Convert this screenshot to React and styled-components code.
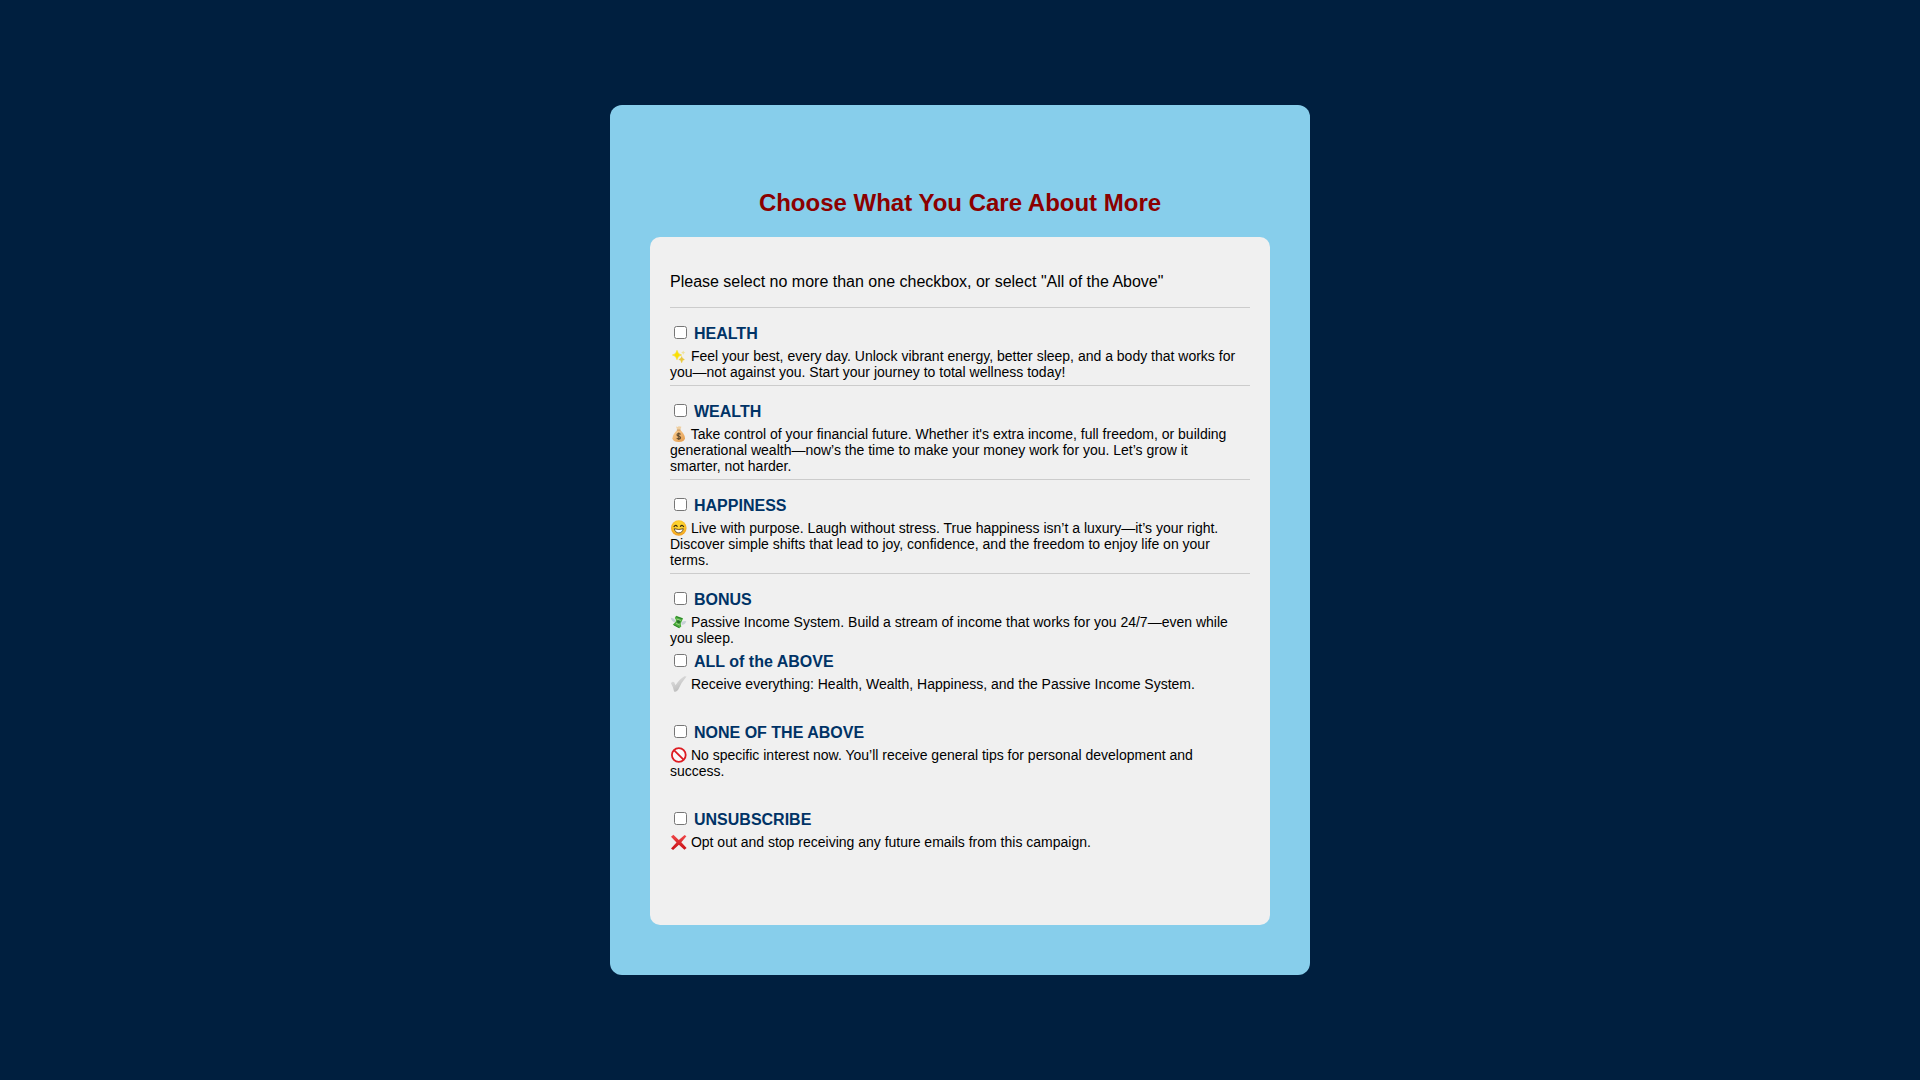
import React, { useState } from 'react';
import styled, { createGlobalStyle } from 'styled-components';

const Sparkles = () => (
  <Icon viewBox="0 0 17 16" aria-hidden="true">
    <path d="M7 2.3 Q7.7 6.3 11.6 7 Q7.7 7.7 7 11.7 Q6.3 7.7 2.4 7 Q6.3 6.3 7 2.3Z" fill="#fbe000" stroke="#f3d91a" strokeWidth="0.6" />
    <path d="M11.7 8.3 Q12.1 11.1 14.6 11.6 Q12.1 12.1 11.7 15 Q11.2 12.1 8.8 11.6 Q11.2 11.1 11.7 8.3Z" fill="#e8c73c" stroke="#e8c73c" strokeWidth="0.3" />
    <path d="M13.2 2.4 Q13.6 4.2 15.3 4.6 Q13.6 5 13.2 6.8 Q12.8 5 11.1 4.6 Q12.8 4.2 13.2 2.4Z" fill="#eee29a" />
  </Icon>
)

const MoneyBag = () => (
  <Icon viewBox="0 0 17 16" aria-hidden="true">
    <defs>
      <linearGradient id="bag" x1="0" y1="0" x2="1" y2="1">
        <stop offset="0" stopColor="#fbd197" />
        <stop offset="1" stopColor="#e39a4b" />
      </linearGradient>
    </defs>
    <path d="M6 0.6 L7.5 1 L8.8 0.3 L11.4 0.8 L10.3 3.8 L7.2 3.8Z" fill="#efcfa0" />
    <path d="M7.2 4 H10.3 Q15 8.5 15 12.3 Q14.6 15.9 8.7 15.9 Q2.6 15.9 2.4 12.3 Q2.5 8.5 7.2 4Z" fill="url(#bag)" />
    <path d="M6.9 4 H10.5" stroke="#b98243" strokeWidth="0.8" />
    <path d="M10.6 8.3 Q9.8 7.5 8.7 7.5 Q7 7.6 7 8.9 Q7.1 9.9 8.8 10.2 Q10.7 10.6 10.6 11.8 Q10.4 13 8.8 13 Q7.4 13 6.8 12 M8.8 6.5 V14" fill="none" stroke="#604a2c" strokeWidth="1.1" />
  </Icon>
)

const Smile = () => (
  <Icon viewBox="0 0 17 16" aria-hidden="true">
    <defs>
      <radialGradient id="face" cx="0.5" cy="0.4" r="0.6">
        <stop offset="0.5" stopColor="#fdd22f" />
        <stop offset="1" stopColor="#f29a1f" />
      </radialGradient>
    </defs>
    <circle cx="8.8" cy="8" r="7.8" fill="url(#face)" />
    <path d="M4 6.6 Q5.6 4.2 7.2 6.4 M10.4 6.4 Q12 4.2 13.6 6.6" fill="none" stroke="#3a2c12" strokeWidth="1.1" strokeLinecap="round" />
    <path d="M4.3 8.7 Q8.8 10.3 13.3 8.7 Q12.4 12.9 8.8 12.9 Q5.2 12.9 4.3 8.7Z" fill="#fff" stroke="#4a3213" strokeWidth="0.8" />
  </Icon>
)

const FlyingMoney = () => (
  <Icon viewBox="0 0 17 16" aria-hidden="true">
    <path d="M0.8 3.8 Q3.8 3.6 5.4 6.4 L4.7 8.2 Q1.4 7.6 0.8 3.8Z M16.3 7.3 Q13.2 6.4 11.2 8.6 L11.8 10.9 Q15.4 10.8 16.3 7.3Z" fill="#c6d0d6" />
    <path d="M6.1 1.8 L13.1 4.3 L11.7 7.4 Q10.5 8.8 10.8 10.2 L11.3 12.5 L9.2 14.3 L2.8 10.7 L5.6 7.7 Q6.3 6.5 5.6 5.2 L4.7 4Z" fill="#4cae3d" />
    <path d="M6.2 2.7 L12.2 4.8 M3.8 10.8 L9.2 13.6" stroke="#247629" strokeWidth="0.8" />
    <circle cx="8.6" cy="7.6" r="1.7" fill="#28702b" />
    <path d="M6.6 5 L10.7 6.4 M6 9.4 L9.8 11" stroke="#a7d68c" strokeWidth="0.9" />
  </Icon>
)

const Check = () => (
  <Icon viewBox="0 0 17 16" aria-hidden="true">
    <defs>
      <linearGradient id="check" x1="0" y1="0" x2="0.5" y2="1">
        <stop offset="0" stopColor="#e6e6e6" />
        <stop offset="1" stopColor="#bbb" />
      </linearGradient>
    </defs>
    <path d="M0.9 7.3 Q2.4 5.1 4.2 6.2 L5.5 9.2 Q9.2 3.2 14.4 0.2 L16.5 0.5 Q11.2 6.5 8 14 Q6 16.4 4.1 15.4 Q3 10.5 0.9 7.3Z" fill="url(#check)" />
  </Icon>
)

const NoEntry = () => (
  <Icon viewBox="0 0 17 16" aria-hidden="true">
    <circle cx="8.8" cy="8" r="6.9" fill="#fafafa" stroke="#dd1c22" strokeWidth="1.8" />
    <path d="M4.2 3.4 L13.5 12.6" stroke="#dd1c22" strokeWidth="1.8" />
  </Icon>
)

const Cross = () => (
  <Icon viewBox="0 0 17 16" aria-hidden="true">
    <defs>
      <linearGradient id="cross" x1="0" y1="0" x2="0" y2="1">
        <stop offset="0" stopColor="#f0484a" />
        <stop offset="1" stopColor="#c80f14" />
      </linearGradient>
    </defs>
    <path d="M1 2.8 L3.4 0.8 L8.8 6 L14.6 0.9 L16.4 2.3 L11.3 8.2 L16.6 14 L14.4 15.8 L8.9 10.8 L3.1 16 L1 14.5 L6.5 8.4Z" fill="url(#cross)" />
  </Icon>
)

const choices = [
  { id: 'health', title: 'HEALTH', line: true, icon: <Sparkles />, text: 'Feel your best, every day. Unlock vibrant energy, better sleep, and a body that works for you—not against you. Start your journey to total wellness today!' },
  { id: 'wealth', title: 'WEALTH', line: true, icon: <MoneyBag />, text: "Take control of your financial future. Whether it's extra income, full freedom, or building generational wealth—now’s the time to make your money work for you. Let’s grow it smarter, not harder." },
  { id: 'happiness', title: 'HAPPINESS', line: true, icon: <Smile />, text: 'Live with purpose. Laugh without stress. True happiness isn’t a luxury—it’s your right. Discover simple shifts that lead to joy, confidence, and the freedom to enjoy life on your terms.' },
  { id: 'bonus', title: 'BONUS', line: true, icon: <FlyingMoney />, text: 'Passive Income System. Build a stream of income that works for you 24/7—even while you sleep.' },
  { id: 'all', title: 'ALL of the ABOVE', space: 25, icon: <Check />, text: 'Receive everything: Health, Wealth, Happiness, and the Passive Income System.' },
  { id: 'none', title: 'NONE OF THE ABOVE', space: 25, icon: <NoEntry />, text: 'No specific interest now. You’ll receive general tips for personal development and success.' },
  { id: 'unsubscribe', title: 'UNSUBSCRIBE', space: 50, icon: <Cross />, text: 'Opt out and stop receiving any future emails from this campaign.' },
];

const App = () => {
  const [selected, setSelected] = useState('');

  const toggle = (id) => {
    setSelected(selected === id ? '' : id);
  }

  return (
    <>
      <GlobalStyle />
      <Page>
        <Card>
          <Title>Choose What You Care About More</Title>
          <Form>
            <Intro>Please select no more than one checkbox, or select "All of the Above"</Intro>
            {choices.map((choice) => (
              <Choice key={choice.id} $line={choice.line} $space={choice.space}>
                <ChoiceLabel htmlFor={choice.id}>
                  <Checkbox
                    id={choice.id}
                    type="checkbox"
                    checked={selected === choice.id}
                    onChange={() => toggle(choice.id)}
                    aria-describedby={`${choice.id}-text`}
                  />
                  {choice.title}
                </ChoiceLabel>
                <Description id={`${choice.id}-text`}>{choice.icon} {choice.text}</Description>
              </Choice>
            ))}
          </Form>
        </Card>
      </Page>
    </>
  )
}

export default App

//styles

const GlobalStyle = createGlobalStyle`
*{
    box-sizing: border-box;
}
body{
    margin: 0;
    background: #001f3f;
    color: #000;
    font-family: Arial, "Liberation Sans", sans-serif;
}`;

const Page = styled.main`
display: flex;
align-items: center;
justify-content: center;
min-height: 100vh;
padding: 20px;`;

const Card = styled.section`
width: 100%;
max-width: 700px;
padding: 84px 40px 50px;
border-radius: 12px;
background: #87ceeb;`;

const Title = styled.h1`
margin: 0 0 20px;
color: #8b0000;
font-size: 24px;
line-height: 28px;
text-align: center;`;

const Form = styled.form`
padding: 20px;
border-radius: 10px;
background: #f0f0f0;`;

const Intro = styled.p`
margin: 16px 0;
font-size: 16px;
line-height: 18px;`;

const Choice = styled.div`
padding-top: ${({$line}) => ($line ? '15px' : '0')};
padding-bottom: ${({$space}) => ($space || 0)}px;
border-top: ${({$line}) => ($line ? '1px solid #ccc' : 'none')};`;

const ChoiceLabel = styled.label`
display: flex;
align-items: flex-start;
gap: 4px;
color: #003366;
font-size: 16px;
font-weight: bold;
line-height: 22px;
cursor: pointer;`;

const Checkbox = styled.input`
width: 13px;
height: 13px;
margin: 3px 3px 3px 4px;`;

const Description = styled.p`
margin: 3px 0 5px;
padding-right: 10px;
font-size: 14px;
line-height: 16px;`;

const Icon = styled.svg`
width: 17px;
height: 16px;
vertical-align: bottom;`;
